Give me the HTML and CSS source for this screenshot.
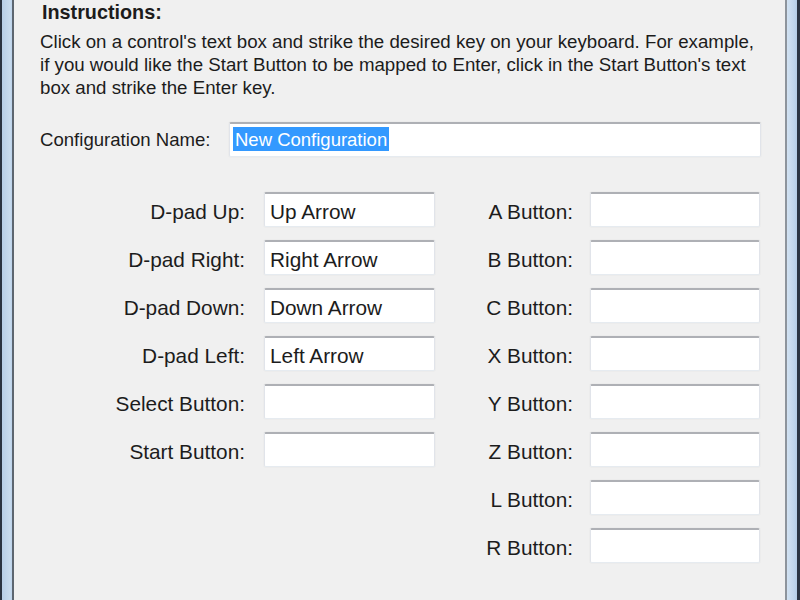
FILE: index.html
```html
<!DOCTYPE html>
<html>
<head>
<meta charset="utf-8">
<link rel="stylesheet" href="styles.css">
</head>
<body>
<div class="window">
  <div class="frame frame-left"></div>
  <div class="content">
    <div class="heading">Instructions:</div>
    <p class="instructions">Click on a control's text box and strike the desired key on your keyboard. For example, if you would like the Start Button to be mapped to Enter, click in the Start Button's text box and strike the Enter key.</p>
    <div class="config-row">
      <div class="config-label">Configuration Name:</div>
      <div class="textbox config-box"><span class="sel">New Configuration</span></div>
    </div>
    <div class="mapping">
      <div class="group group-left">
        <div class="label">D-pad Up:</div><div class="textbox">Up Arrow</div>
        <div class="label">D-pad Right:</div><div class="textbox">Right Arrow</div>
        <div class="label">D-pad Down:</div><div class="textbox">Down Arrow</div>
        <div class="label">D-pad Left:</div><div class="textbox">Left Arrow</div>
        <div class="label">Select Button:</div><div class="textbox"></div>
        <div class="label">Start Button:</div><div class="textbox"></div>
      </div>
      <div class="group group-right">
        <div class="label">A Button:</div><div class="textbox"></div>
        <div class="label">B Button:</div><div class="textbox"></div>
        <div class="label">C Button:</div><div class="textbox"></div>
        <div class="label">X Button:</div><div class="textbox"></div>
        <div class="label">Y Button:</div><div class="textbox"></div>
        <div class="label">Z Button:</div><div class="textbox"></div>
        <div class="label">L Button:</div><div class="textbox"></div>
        <div class="label">R Button:</div><div class="textbox"></div>
      </div>
    </div>
  </div>
  <div class="frame frame-right"></div>
</div>
</body>
</html>
```

FILE: styles.css
```css
html, body {
  margin: 0;
  padding: 0;
  width: 800px;
  height: 600px;
  overflow: hidden;
  background: #f0f0f0;
}

.window {
  display: flex;
  width: 800px;
  height: 600px;
  font-family: "Liberation Sans", Arial, sans-serif;
  color: #1c1c1c;
}

.frame {
  flex: none;
  height: 100%;
}

.frame-left {
  width: 12px;
  background: linear-gradient(to right, #2a3442 0, #2a3442 2px, #b7cfe8 2px, #c8dcef 10px, #bcd2ea 12px);
  border-right: 2px solid #5d6670;
}

.frame-right {
  width: 13px;
  border-left: 2px solid #8d949c;
  background: linear-gradient(to right, #d2e2f2 0, #bcd3ea 8px, #b2cbe5 10px, #2a3442 10px);
}

.content {
  flex: 1;
  padding: 1px 0 0 26px;
}

.heading {
  font-weight: bold;
  font-size: 19.8px;
  line-height: 23px;
  padding-left: 2px;
}

.instructions {
  margin: 6px 0 0 0;
  font-size: 18.7px;
  line-height: 23px;
  width: 718px;
}

.config-row {
  display: flex;
  align-items: center;
  margin-top: 23px;
  height: 35px;
}

.config-label {
  width: 189px;
  font-size: 18.6px;
  line-height: 35px;
}

.textbox {
  box-sizing: border-box;
  height: 35px;
  background: #ffffff;
  border-style: solid;
  border-width: 2px 1px 1px 1px;
  border-color: #aeb0b5 #e1e4ea #e6ebf0 #e1e4ea;
  border-radius: 2px;
  box-shadow: 0 0 0 1px #ececec;
  font-size: 20.8px;
  line-height: 33px;
  padding: 1px 0 0 5px;
  white-space: nowrap;
}

.config-box {
  width: 532px;
  font-size: 18.5px;
  padding: 0 0 0 3px;
  line-height: 31px;
}

.sel {
  background: #3399ff;
  color: #ffffff;
  padding: 2px 2px 1px 2px;
}

.mapping {
  display: flex;
  margin-top: 35px;
}

.group {
  display: grid;
  grid-auto-rows: 35px;
  row-gap: 13px;
  align-content: start;
}

.group-left {
  grid-template-columns: 205px 171px;
  column-gap: 19px;
}

.group-right {
  grid-template-columns: 138px 170px;
  column-gap: 17px;
}

.label {
  text-align: right;
  font-size: 20.8px;
  line-height: 35px;
  padding-top: 2px;
  white-space: nowrap;
}
```
